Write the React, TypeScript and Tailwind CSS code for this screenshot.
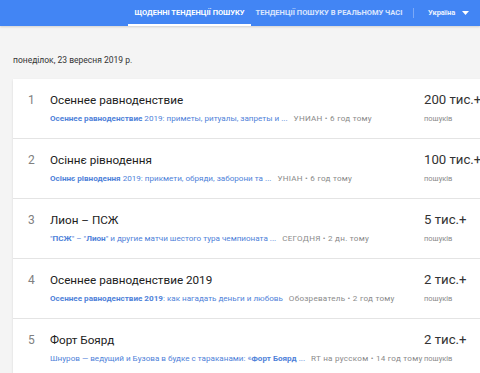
import React from 'react';

interface Trend {
  n: number;
  title: string;
  snippet: React.ReactNode;
  source: string;
  count: string;
}

const TRENDS: Trend[] = [
  {
    n: 1,
    title: 'Осеннее равноденствие',
    snippet: (
      <>
        <b className="font-bold">Осеннее равноденствие</b> 2019: приметы, ритуалы, запреты и ...
      </>
    ),
    source: 'УНИАН • 6 год тому',
    count: '200 тис.+',
  },
  {
    n: 2,
    title: 'Осіннє рівнодення',
    snippet: (
      <>
        <b className="font-bold">Осіннє рівнодення</b> 2019: прикмети, обряди, заборони та ...
      </>
    ),
    source: 'УНІАН • 6 год тому',
    count: '100 тис.+',
  },
  {
    n: 3,
    title: 'Лион – ПСЖ',
    snippet: (
      <>
        "<b className="font-bold">ПСЖ</b>" – "<b className="font-bold">Лион</b>" и другие матчи шестого тура чемпионата ...
      </>
    ),
    source: 'СЕГОДНЯ • 2 дн. тому',
    count: '5 тис.+',
  },
  {
    n: 4,
    title: 'Осеннее равноденствие 2019',
    snippet: (
      <>
        <b className="font-bold">Осеннее равноденствие 2019</b>: как нагадать деньги и любовь
      </>
    ),
    source: 'Обозреватель • 2 год тому',
    count: '2 тис.+',
  },
  {
    n: 5,
    title: 'Форт Боярд',
    snippet: (
      <>
        Шнуров — ведущий и Бузова в будке с тараканами: «<b className="font-bold">Форт Боярд</b> ...
      </>
    ),
    source: 'RT на русском • 14 год тому',
    count: '2 тис.+',
  },
];

const Row: React.FC<{ t: Trend; last: boolean }> = ({ t, last }) => (
  <div className={`flex h-[60px] ${last ? '' : 'border-b border-[#e4e4e4]'}`}>
    <div className="w-[37px] shrink-0 pl-[15px] pt-[12px] text-[12px] text-[#808080]">{t.n}</div>
    <div className="flex-1 min-w-0 pt-[12px]">
      <div className="text-[11.7px] leading-[18px] text-[#212121] whitespace-nowrap">{t.title}</div>
      <div className="mt-[3px] flex items-baseline whitespace-nowrap text-[8.1px] leading-[12px]">
        <span className="text-[#4f82d9]">{t.snippet}</span>
        <span className="ml-[6px] text-[#8a8a8a] tracking-[0.25px]">{t.source}</span>
      </div>
    </div>
    <div className="w-[69px] shrink-0 pt-[11px] whitespace-nowrap">
      <div className="text-[13.2px] leading-[20px] text-[#333]">{t.count}</div>
      <div className="mt-[4px] text-[7.5px] leading-[10px] text-[#8a8a8a]">пошуків</div>
    </div>
  </div>
);

export default function App() {
  return (
    <div className="w-[480px] h-[373px] overflow-hidden bg-[#f4f4f4] font-['Roboto',sans-serif]">
      <div className="h-[26px] bg-[#4285f4] flex items-stretch whitespace-nowrap shadow-[0_1px_2px_rgba(0,0,0,0.15)]">
        <div className="w-[128px] shrink-0" />
        <div className="relative w-[123px] shrink-0 flex items-center justify-center text-[7.5px] font-bold text-white uppercase">
          Щоденні тенденції пошуку
          <div className="absolute left-0 right-0 bottom-0 h-[2px] bg-white" />
        </div>
        <div className="w-[156px] shrink-0 flex items-center justify-center text-[7.5px] font-bold text-white/80 uppercase">
          Тенденції пошуку в реальному часі
        </div>
        <div className="my-[8px] ml-[6px] w-px bg-white/30" />
        <div className="ml-[14px] flex items-center gap-[7px] text-[7.5px] font-bold text-white/90">
          Україна
          <svg width="7" height="4" viewBox="0 0 7 4">
            <path d="M0 0h7L3.5 4z" fill="white" />
          </svg>
        </div>
      </div>
      <div className="pl-[13px] pt-[28px] text-[8.5px] text-[#333]">понеділок, 23 вересня 2019 р.</div>
      <div className="ml-[13px] mt-[12px] w-[480px] bg-white shadow-[0_1px_2px_rgba(0,0,0,0.12)]">
        {TRENDS.map((t, i) => (
          <Row key={t.n} t={t} last={i === TRENDS.length - 1} />
        ))}
      </div>
    </div>
  );
}
